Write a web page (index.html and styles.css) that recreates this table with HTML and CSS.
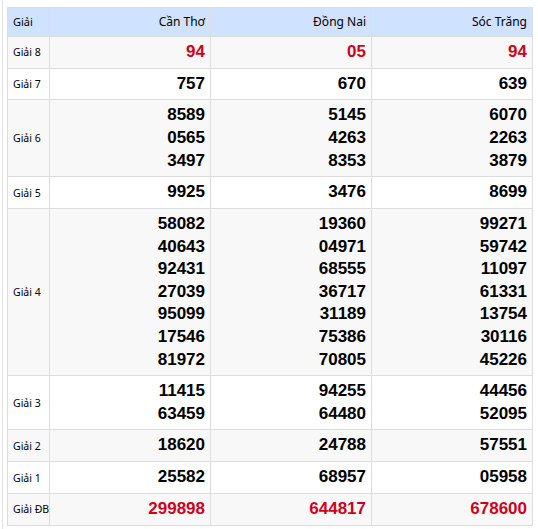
FILE: index.html
```html
<!DOCTYPE html>
<html lang="vi">
<head>
<meta charset="utf-8">
<link rel="stylesheet" href="styles.css">
</head>
<body>
<div class="frame">
<table class="kq">
<colgroup><col class="c-label"><col class="c-prov"><col class="c-prov"><col class="c-prov"></colgroup>
<thead>
<tr><th class="label">Giải</th><th>Cần Thơ</th><th>Đồng Nai</th><th>Sóc Trăng</th></tr>
</thead>
<tbody>
<tr class="odd"><td class="label">Giải 8</td><td class="num red">94</td><td class="num red">05</td><td class="num red">94</td></tr>
<tr><td class="label">Giải 7</td><td class="num">757</td><td class="num">670</td><td class="num">639</td></tr>
<tr class="odd"><td class="label">Giải 6</td><td class="num">8589<br>0565<br>3497</td><td class="num">5145<br>4263<br>8353</td><td class="num">6070<br>2263<br>3879</td></tr>
<tr><td class="label">Giải 5</td><td class="num">9925</td><td class="num">3476</td><td class="num">8699</td></tr>
<tr class="odd"><td class="label">Giải 4</td><td class="num">58082<br>40643<br>92431<br>27039<br>95099<br>17546<br>81972</td><td class="num">19360<br>04971<br>68555<br>36717<br>31189<br>75386<br>70805</td><td class="num">99271<br>59742<br>11097<br>61331<br>13754<br>30116<br>45226</td></tr>
<tr><td class="label">Giải 3</td><td class="num">11415<br>63459</td><td class="num">94255<br>64480</td><td class="num">44456<br>52095</td></tr>
<tr class="odd"><td class="label">Giải 2</td><td class="num">18620</td><td class="num">24788</td><td class="num">57551</td></tr>
<tr><td class="label">Giải 1</td><td class="num">25582</td><td class="num">68957</td><td class="num">05958</td></tr>
<tr class="odd"><td class="label">Giải ĐB</td><td class="num red">299898</td><td class="num red">644817</td><td class="num red">678600</td></tr>
</tbody>
</table>
</div>
</body>
</html>
```
FILE: styles.css
```css
html, body {
  margin: 0;
  padding: 0;
  background: #fff;
}
.frame {
  margin-left: 2px;
  border-left: 1px solid #e2e2e2;
  padding: 7px 0 0 4px;
  min-height: 522px;
}
.kq {
  border-collapse: collapse;
  table-layout: fixed;
  width: 526px;
  font-family: "Noto Sans", "Open Sans", sans-serif;
  color: #000;
}
.c-label { width: 42px; }
.c-prov { width: 161px; }
.kq th, .kq td {
  border: 1px solid #dddddd;
}
.kq th {
  background: #cfe2ff;
  font-weight: normal;
  font-size: 12px;
  line-height: 18px;
  padding: 5px 5px;
  text-align: right;
}
.kq th.label {
  text-align: left;
  font-size: 11px;
}
.kq td.label {
  font-size: 10.5px;
  padding: 0 5px;
  white-space: nowrap;
  vertical-align: middle;
}
.kq tr.odd td {
  background: #f8f8f8;
}
.kq td.num {
  font-family: "Liberation Sans", Arial, sans-serif;
  font-weight: bold;
  font-size: 17px;
  line-height: 22.6px;
  padding: 4px 5px 4.1px;
  text-align: right;
}
.kq td.red {
  color: #d0021b;
}
```
